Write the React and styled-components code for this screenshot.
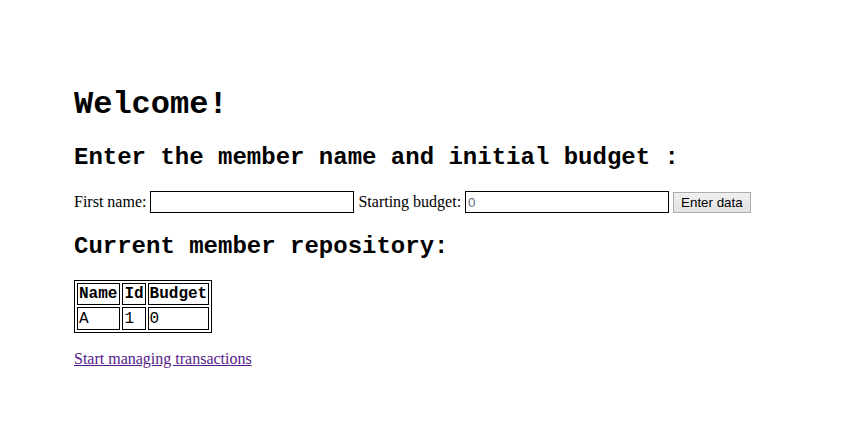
import React, { useState } from 'react';
import styled, { createGlobalStyle } from 'styled-components';

const GlobalStyle = createGlobalStyle`
  body {
    margin: 0;
    background: #fff;
    color: #000;
    font-family: "Liberation Serif", "Times New Roman", serif;
    font-size: 16px;
  }
`;

const Page = styled.div`
  padding: 65px 74px;
`;

const Title = styled.h1`
  font-family: "Liberation Mono", "Courier New", monospace;
  font-size: 32px;
  font-weight: bold;
  margin: 21px 0;
`;

const Heading = styled.h2`
  font-family: "Liberation Mono", "Courier New", monospace;
  font-size: 24px;
  font-weight: bold;
  margin: 20px 0;
`;

const Form = styled.form`
  display: flex;
  align-items: center;
  gap: 4px;
`;

const Field = styled.input`
  box-sizing: border-box;
  width: 204px;
  height: 22px;
  border: 1px solid #000;
  border-radius: 0;
  padding: 1px 2px;
  font-family: "Liberation Sans", Arial, sans-serif;
  font-size: 13.33px;
  color: #5a6a80;
  outline: none;
`;

const Button = styled.button`
  box-sizing: border-box;
  height: 21px;
  padding: 0 7px;
  border: 1px solid #adadad;
  background: linear-gradient(#f0f0f0, #e3e3e3);
  font-family: "Liberation Sans", Arial, sans-serif;
  font-size: 13.33px;
  color: #000;
`;

const Table = styled.table`
  border: 1px solid #000;
  border-spacing: 2px;
  margin: 16px 0 17px;
  font-family: "Liberation Mono", "Courier New", monospace;
  font-size: 16px;

  th, td {
    border: 1px solid #000;
    padding: 1px;
    height: 18px;
    text-align: left;
  }
  th { font-weight: bold; }
  td { font-weight: normal; height: 19px; }
  th:first-child, td:first-child { padding-right: 2px; }
`;

const Link = styled.a`
  color: #551a8b;
  text-decoration: underline;
`;

export default function App() {
  const [members] = useState([{ name: 'A', id: 1, budget: 0 }]);
  return (
    <Page>
      <GlobalStyle />
      <Title>Welcome!</Title>
      <Heading>Enter the member name and initial budget :</Heading>
      <Form onSubmit={(e) => e.preventDefault()}>
        <label>First name:</label>
        <Field type="text" />
        <label>Starting budget:</label>
        <Field type="text" defaultValue="0" />
        <Button type="submit">Enter data</Button>
      </Form>
      <Heading>Current member repository:</Heading>
      <Table>
        <thead>
          <tr><th>Name</th><th>Id</th><th>Budget</th></tr>
        </thead>
        <tbody>
          {members.map((m) => (
            <tr key={m.id}>
              <td>{m.name}</td>
              <td>{m.id}</td>
              <td>{m.budget}</td>
            </tr>
          ))}
        </tbody>
      </Table>
      <Link href="#">Start managing transactions</Link>
    </Page>
  );
}
